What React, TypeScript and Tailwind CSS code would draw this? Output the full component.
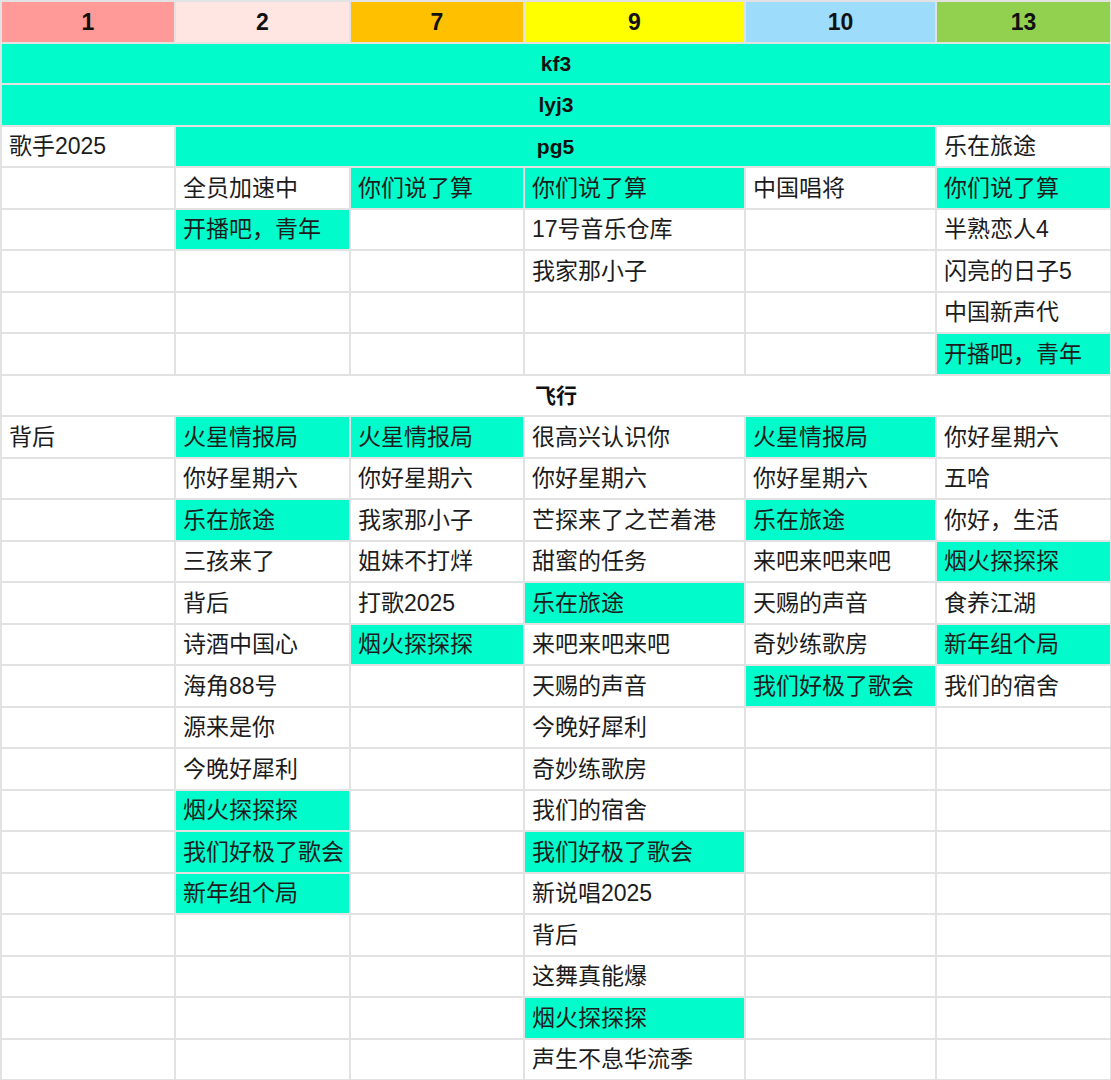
type Cell = { text?: string; teal?: boolean; bold?: boolean; span?: 4 | 6 };

const T = (text: string): Cell => ({ text, teal: true });
const N = (text = ""): Cell => ({ text });
const E: Cell = {};

const headers = [
  { label: "1", bg: "bg-[#ff9a98]" },
  { label: "2", bg: "bg-[#ffe6e2]" },
  { label: "7", bg: "bg-[#ffc000]" },
  { label: "9", bg: "bg-[#ffff00]" },
  { label: "10", bg: "bg-[#9ddcfb]" },
  { label: "13", bg: "bg-[#92d050]" },
];

const rows: Cell[][] = [
  [{ text: "kf3", teal: true, bold: true, span: 6 }],
  [{ text: "lyj3", teal: true, bold: true, span: 6 }],
  [N("歌手2025"), { text: "pg5", teal: true, bold: true, span: 4 }, N("乐在旅途")],
  [E, N("全员加速中"), T("你们说了算"), T("你们说了算"), N("中国唱将"), T("你们说了算")],
  [E, T("开播吧，青年"), E, N("17号音乐仓库"), E, N("半熟恋人4")],
  [E, E, E, N("我家那小子"), E, N("闪亮的日子5")],
  [E, E, E, E, E, N("中国新声代")],
  [E, E, E, E, E, T("开播吧，青年")],
  [{ text: "飞行", bold: true, span: 6 }],
  [N("背后"), T("火星情报局"), T("火星情报局"), N("很高兴认识你"), T("火星情报局"), N("你好星期六")],
  [E, N("你好星期六"), N("你好星期六"), N("你好星期六"), N("你好星期六"), N("五哈")],
  [E, T("乐在旅途"), N("我家那小子"), N("芒探来了之芒着港"), T("乐在旅途"), N("你好，生活")],
  [E, N("三孩来了"), N("姐妹不打烊"), N("甜蜜的任务"), N("来吧来吧来吧"), T("烟火探探探")],
  [E, N("背后"), N("打歌2025"), T("乐在旅途"), N("天赐的声音"), N("食养江湖")],
  [E, N("诗酒中国心"), T("烟火探探探"), N("来吧来吧来吧"), N("奇妙练歌房"), T("新年组个局")],
  [E, N("海角88号"), E, N("天赐的声音"), T("我们好极了歌会"), N("我们的宿舍")],
  [E, N("源来是你"), E, N("今晚好犀利"), E, E],
  [E, N("今晚好犀利"), E, N("奇妙练歌房"), E, E],
  [E, T("烟火探探探"), E, N("我们的宿舍"), E, E],
  [E, T("我们好极了歌会"), E, T("我们好极了歌会"), E, E],
  [E, T("新年组个局"), E, N("新说唱2025"), E, E],
  [E, E, E, N("背后"), E, E],
  [E, E, E, N("这舞真能爆"), E, E],
  [E, E, E, T("烟火探探探"), E, E],
  [E, E, E, N("声生不息华流季"), E, E],
];

function GridCell({ cell }: { cell: Cell }) {
  const span = cell.span === 6 ? "col-span-6" : cell.span === 4 ? "col-span-4" : "";
  const bg = cell.teal ? "bg-[#02fbcb]" : "bg-white";
  if (cell.bold) {
    return (
      <div
        className={`${span} ${bg} flex items-center justify-center text-[21px] font-bold text-[#111]`}
      >
        {cell.text}
      </div>
    );
  }
  return (
    <div
      className={`${span} ${bg} flex items-center whitespace-nowrap pl-[7px] text-[23px] text-[#1c1c1c]`}
    >
      {cell.text}
    </div>
  );
}

export default function App() {
  return (
    <div
      className="w-[1111px] h-[1080px] overflow-hidden bg-white"
      style={{ fontFamily: '"Liberation Sans", "Noto Sans CJK SC", sans-serif' }}
    >
      <div className="grid grid-cols-[172px_173px_172px_219px_189px_173px] auto-rows-[39.5px] gap-[2px] bg-[#e2e2e2] pt-[2px] pl-[2px] pr-px pb-[2px]">
        {headers.map((h) => (
          <div
            key={h.label}
            className={`${h.bg} flex items-center justify-center text-[23px] font-bold text-[#111]`}
          >
            {h.label}
          </div>
        ))}
        {rows.map((row, i) =>
          row.map((cell, j) => <GridCell key={`${i}-${j}`} cell={cell} />)
        )}
      </div>
    </div>
  );
}
